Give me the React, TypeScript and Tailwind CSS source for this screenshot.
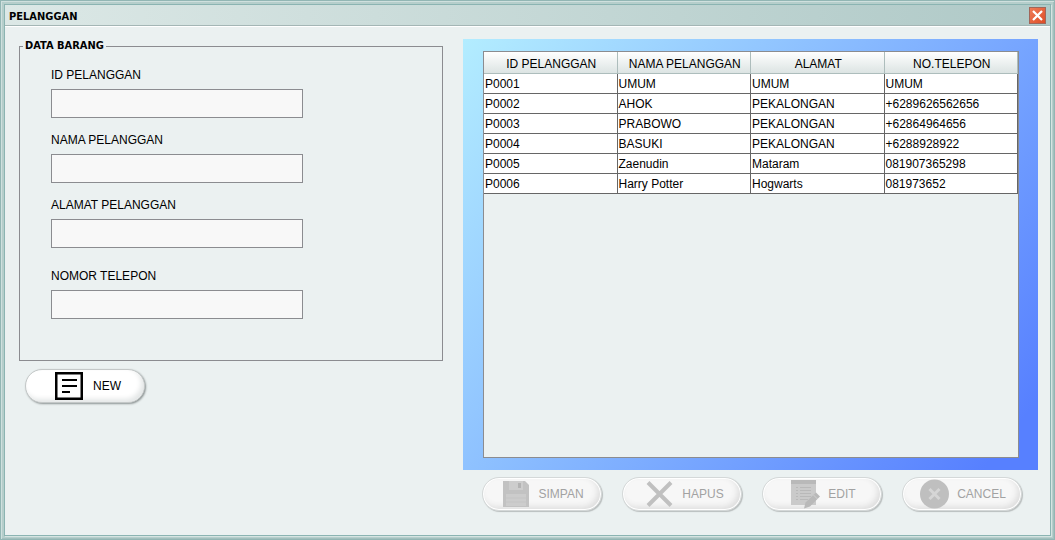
import type { ReactNode } from 'react';

const customers = [
  ['P0001', 'UMUM', 'UMUM', 'UMUM'],
  ['P0002', 'AHOK', 'PEKALONGAN', '+6289626562656'],
  ['P0003', 'PRABOWO', 'PEKALONGAN', '+62864964656'],
  ['P0004', 'BASUKI', 'PEKALONGAN', '+6288928922'],
  ['P0005', 'Zaenudin', 'Mataram', '081907365298'],
  ['P0006', 'Harry Potter', 'Hogwarts', '081973652'],
];

const columns = ['ID PELANGGAN', 'NAMA PELANGGAN', 'ALAMAT', 'NO.TELEPON'];

function Field({ id, label }: { id: string; label: string }) {
  return (
    <div className="flex flex-col gap-1.5">
      <label htmlFor={id} className="leading-4">{label}</label>
      <input
        id={id}
        type="text"
        className="h-[29px] w-[252px] border border-[#8b8c90] bg-[#f8f8f8] px-1 outline-none"
      />
    </div>
  );
}

function PillButton({ icon, label, disabled }: { icon: ReactNode; label: string; disabled?: boolean }) {
  return (
    <button
      type="button"
      disabled={disabled}
      className="flex h-[34px] w-[120px] items-center justify-center gap-2 rounded-full border border-[#c4c8c8] bg-white pl-1.5 whitespace-nowrap text-black shadow-[1px_1px_2px_#8e9595,inset_-3px_-3px_5px_#e4e7e7] disabled:border-[#d4d8d8] disabled:bg-[#f7f7f7] disabled:pl-0.5 disabled:text-[#a2a2a2] disabled:shadow-[1px_1px_1px_#b9bebe,inset_0_0_0_1px_#ffffff,inset_-3px_-3px_6px_#dcdcdc]"
    >
      {icon}
      {label}
    </button>
  );
}

function NewIcon() {
  return (
    <svg width="30" height="28" viewBox="0 0 30 28" fill="none" stroke="#000" aria-hidden="true">
      <rect x="1.25" y="1.25" width="25.5" height="25.5" strokeWidth="2.5" />
      <path d="M7 8h15M7 14h15M7 20h8" strokeWidth="2" />
    </svg>
  );
}

function SaveIcon() {
  return (
    <svg width="28" height="28" viewBox="0 0 28 28" aria-hidden="true">
      <path d="M1 1h22l4 4v22H1z" fill="#c2c2c2" />
      <path d="M7 1h14v9H7z" fill="#cdcdcd" />
      <path d="M16 3h3v5h-3z" fill="#b3b3b3" />
      <path d="M4 14h20v12H4z" fill="#cccccc" />
      <path d="M4 18h20M4 22h20" stroke="#c4c4c4" />
    </svg>
  );
}

function DeleteIcon() {
  return (
    <svg width="32" height="28" viewBox="0 0 32 28" aria-hidden="true">
      <path d="M6 2.500l23 23M29 2.500L6 25.500" stroke="#c0c0c0" strokeWidth="4" />
    </svg>
  );
}

function EditIcon() {
  return (
    <svg width="30" height="30" viewBox="0 0 30 30" aria-hidden="true">
      <path d="M1 1h25v25H1z" fill="#cacaca" />
      <path d="M1 1h25v4H1z" fill="#b9b9b9" />
      <path d="M6 8.500h2M6 11.500h2M6 14.500h2M6 17.500h2M6 20.500h2M10 8.500h11M10 11.500h11M10 14.500h11M10 17.500h11M10 20.500h8" stroke="#b9b9b9" />
      <path d="M14 29.500l1.500-6L26 13.500l4 4L20 27.500z" fill="#b9b9b9" />
      <path d="M23.500 16l4 4" stroke="#d0d0d0" />
    </svg>
  );
}

function CancelIcon() {
  return (
    <svg width="29" height="30" viewBox="0 0 29 30" aria-hidden="true">
      <circle cx="14.5" cy="15" r="14.5" fill="#bfbfbf" />
      <path d="M9.500 10l10 10M19.500 10l-10 10" stroke="#d6d6d6" strokeWidth="3" />
    </svg>
  );
}

export default function App() {
  return (
    <div className="flex min-h-screen flex-col border border-[#92b6b4] bg-[#b5cecb] p-[3px] font-['Liberation_Sans',Arial,sans-serif] text-xs text-black shadow-[inset_1px_1px_0_#cfe0de,inset_-1px_-1px_0_#a3c0be]">
      <div className="flex flex-1 flex-col border border-[#8bb4b2] bg-[#ebf1f1] shadow-[1px_1px_0_#d5e4e2]">
        <header className="flex h-[22px] items-center justify-between border-b border-white bg-linear-to-r/srgb from-[#dce8e6] to-[#afc9c7] pr-1 pb-px pl-1 shadow-[inset_0_-1px_0_#a4b6b5]">
          <h1 className="pt-1 font-['DejaVu_Sans_Condensed','DejaVu_Sans',sans-serif] text-[11px] leading-4 font-bold">PELANGGAN</h1>
          <button
            type="button"
            aria-label="Close"
            className="flex size-[17px] items-center justify-center border border-[#a0665a] bg-linear-to-br/srgb from-[#ee7c58] to-[#de4d26]"
          >
            <svg width="13" height="13" viewBox="0 0 13 13" aria-hidden="true">
              <path d="M2 2l9 9M11 2l-9 9" stroke="#fff" strokeWidth="2.25" />
            </svg>
          </button>
        </header>

        <main className="flex flex-1 gap-5 pt-3 pr-3 pl-3.5">
          <section className="w-[424px] shrink-0">
            <fieldset className="h-[322px] border border-[#8b8c90] pl-[3px]">
              <legend className="px-0.5 font-['DejaVu_Sans_Condensed','DejaVu_Sans',sans-serif] text-[11px] leading-[14px] font-bold">
                DATA BARANG
              </legend>
              <div className="flex flex-col gap-3.5 pt-3.5 pl-7">
                <Field id="customer-id" label="ID PELANGGAN" />
                <Field id="customer-name" label="NAMA PELANGGAN" />
                <Field id="customer-address" label="ALAMAT PELANGGAN" />
                <div className="pt-1.5">
                  <Field id="customer-phone" label="NOMOR TELEPON" />
                </div>
              </div>
            </fieldset>
            <div className="pt-2 pl-1.5">
              <PillButton icon={<NewIcon />} label="NEW" />
            </div>
          </section>

          <section className="flex min-w-0 flex-1 flex-col">
            <div className="flex flex-1 bg-linear-128/srgb from-[#b3edff] to-[#5780ff] to-94% py-3 pr-[19px] pl-5">
              <div className="flex-1 border border-[#8b8c90] bg-[#ebf1f1]">
                <table className="w-full table-fixed border-separate border-spacing-0">
                  <thead>
                    <tr>
                      {columns.map((name) => (
                        <th
                          key={name}
                          scope="col"
                          className="h-[22px] border-r border-b border-[#adbdbc] bg-linear-to-b from-white to-[#dce4e3] p-0 pt-0.5 pl-0.5 font-normal whitespace-nowrap"
                        >
                          {name}
                        </th>
                      ))}
                    </tr>
                  </thead>
                  <tbody>
                    {customers.map((row) => (
                      <tr key={row[0]}>
                        {row.map((value, i) => (
                          <td
                            key={columns[i]}
                            className="h-5 border-r border-b border-[#666666] bg-white p-0 pl-px leading-4 whitespace-nowrap"
                          >
                            {value}
                          </td>
                        ))}
                      </tr>
                    ))}
                  </tbody>
                </table>
              </div>
            </div>
            <div className="flex gap-5 pt-[7px] pb-6 pl-[19px]">
              <PillButton disabled icon={<SaveIcon />} label="SIMPAN" />
              <PillButton disabled icon={<DeleteIcon />} label="HAPUS" />
              <PillButton disabled icon={<EditIcon />} label="EDIT" />
              <PillButton disabled icon={<CancelIcon />} label="CANCEL" />
            </div>
          </section>
        </main>
      </div>
    </div>
  );
}
